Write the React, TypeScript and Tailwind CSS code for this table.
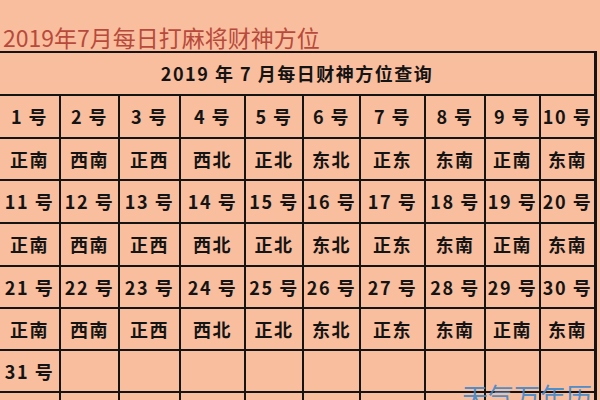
import React from "react";

const dirs = ["正南", "西南", "正西", "西北", "正北", "东北", "正东", "东南", "正南", "东南"];

const rows: string[][] = [
  Array.from({ length: 10 }, (_, i) => `${i + 1} 号`),
  dirs,
  Array.from({ length: 10 }, (_, i) => `${i + 11} 号`),
  dirs,
  Array.from({ length: 10 }, (_, i) => `${i + 21} 号`),
  dirs,
  ["31 号", "", "", "", "", "", "", "", "", ""],
  ["", "", "", "", "", "", "", "", "", ""],
];

export default function App() {
  return (
    <div className="relative w-[600px] h-[400px] overflow-hidden bg-[#f8be9e] font-['Noto_Sans_CJK_SC','Noto_Sans',sans-serif]">
      <div className="h-[51px] pt-[26px] pl-[3px]">
        <h1 className="text-[23px] leading-none font-normal text-[#b84a3c] whitespace-nowrap">
          2019年7月每日打麻将财神方位
        </h1>
      </div>

      <div className="w-[597px] bg-[#141414] pt-[2px] pr-[3px]">
        <div className="grid grid-cols-[59px_57px_59px_63px_56px_55px_63px_58px_53px_53px] grid-rows-[41px_41px_40px_41px_41px_40px_40px_40px_40px] gap-[2px]">
          <div className="col-span-10 bg-[#f8be9e] flex items-center justify-center text-[18px] font-bold tracking-[1.5px] text-[#141414] whitespace-nowrap">
            2019 年 7 月每日财神方位查询
          </div>
          {rows.map((row, r) =>
            row.map((cell, c) => (
              <div
                key={`${r}-${c}`}
                className="bg-[#f8be9e] flex items-center justify-center text-[18px] font-bold tracking-[1.5px] text-[#141414] whitespace-nowrap"
              >
                {cell}
              </div>
            ))
          )}
        </div>
      </div>

      <div className="absolute left-[462px] top-[383px] text-[26px] leading-none text-[#3a86cc]/90 whitespace-nowrap">
        天气万年历
      </div>
    </div>
  );
}
